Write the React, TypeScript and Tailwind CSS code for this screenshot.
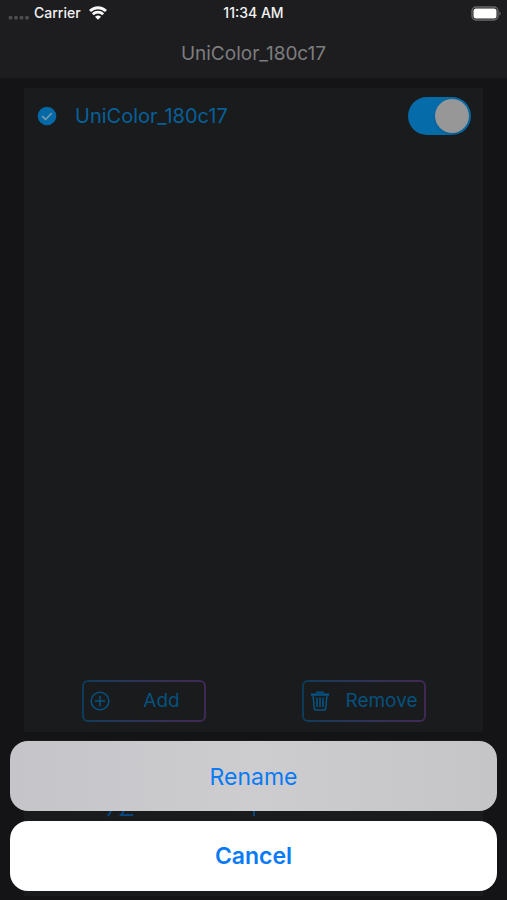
import { useState } from "react";

function StatusBar() {
  return (
    <div className="grid h-[26px] grid-cols-3 items-center px-[6px] text-sm font-medium text-[#f2f2f2]">
      <div className="flex items-center gap-1 pl-[2px]">
        <svg className="h-[10px] w-[22px] self-end" viewBox="0 0 22 10" fill="#4c4c4e" aria-hidden="true">
          <circle cx="2.5" cy="4.8" r="2" />
          <circle cx="8" cy="4.8" r="2" />
          <circle cx="13.5" cy="4.8" r="2" />
          <circle cx="19" cy="4.8" r="2" />
        </svg>
        <span>Carrier</span>
        <svg className="ml-1 h-[14px] w-[18px] shrink-0" viewBox="0 0 18 14" aria-hidden="true">
          <g fill="none" stroke="#f8f8f8" strokeWidth="2.8">
            <path d="M1 5.1C5.4.6 12.6.6 17 5.1" />
            <path d="M3.8 8.3C6.7 5.5 11.3 5.5 14.2 8.3" />
          </g>
          <path d="M9 13.8 6 10.8Q9 8.4 12 10.8Z" fill="#f8f8f8" />
        </svg>
      </div>
      <span className="text-center">11:34 AM</span>
      <svg className="h-[15px] w-[30px] justify-self-end" viewBox="0 0 30 15" aria-hidden="true">
        <rect x="1" y="1" width="26" height="13" rx="4" fill="none" stroke="#67676a" strokeWidth="1.4" />
        <rect x="2.5" y="2.5" width="23" height="10" rx="2.5" fill="#fff" />
        <path d="M28.3 5.3q1.4.7 1.4 2.2t-1.4 2.2z" fill="#67676a" />
      </svg>
    </div>
  );
}

function AddIcon() {
  return (
    <svg className="size-5 shrink-0" viewBox="0 0 20 20" fill="none" stroke="#06517f" strokeWidth="1.6" aria-hidden="true">
      <circle cx="10" cy="10" r="8.8" />
      <path d="M10 4.8v10.4M4.8 10h10.4" />
    </svg>
  );
}

function TrashIcon() {
  return (
    <svg className="size-5 shrink-0" viewBox="0 0 20 20" fill="none" stroke="#06517f" strokeWidth="1.6" aria-hidden="true">
      <path d="M.8 3.6h18.400" strokeWidth="2.4" />
      <path d="M7 3V1.200h6V3" />
      <path d="M3 4l1.300 13.200q.1 1.800 1.900 1.800h7.600q1.800 0 1.900-1.800L17 4" />
      <path d="M7 6.5v9.5M10 6.5v9.5M13 6.5v9.5" />
    </svg>
  );
}

function PanelButton({ icon, label }: { icon: React.ReactNode; label: string }) {
  return (
    <button type="button" className="h-[42px] w-[124px] rounded-md bg-linear-to-r from-[#0a3c59] to-[#412856] p-[2px]">
      <span className="flex h-full items-center rounded-[4px] bg-[#191b1c] pl-[6px]">
        {icon}
        <span className="flex-1 pt-px pl-[10px] text-center text-[19px] text-[#06517f]">{label}</span>
      </span>
    </button>
  );
}

export default function App() {
  const [selected, setSelected] = useState(true);
  const [enabled, setEnabled] = useState(true);
  const [open, setOpen] = useState(true);

  return (
    <div className="relative flex min-h-screen flex-col bg-[#141416] font-['Inter','Liberation_Sans',sans-serif]">
      <header className="h-[78px] bg-[#1d1d1f]">
        <StatusBar />
        <h1 className="pt-[14px] text-center text-[19px] leading-7 text-[#7d7d7f]">UniColor_180c17</h1>
      </header>

      <main className="flex flex-1 flex-col gap-2 px-6 pt-[10px] pb-1">
        <section className="flex flex-1 flex-col bg-[#191b1c] pb-[10px]">
          <div className="flex h-14 items-center pr-3 pl-[13px]">
            <label className="flex flex-1 items-center gap-[18px] text-xl text-[#06609a]">
              <input
                type="checkbox"
                className="peer sr-only"
                checked={selected}
                onChange={(e) => setSelected(e.target.checked)}
              />
              <svg className="size-5 shrink-0 opacity-40 peer-checked:opacity-100" viewBox="0 0 20 20" aria-hidden="true">
                <circle cx="10" cy="10" r="9.3" fill="#0669a7" />
                <path d="M5.2 10.1l3.4 3.3 6.200-6.400" fill="none" stroke="#7c9eae" strokeWidth="1.5" />
              </svg>
              <span>UniColor_180c17</span>
            </label>
            <label className="flex">
              <input
                type="checkbox"
                role="switch"
                aria-label="Enable UniColor_180c17"
                className="peer sr-only"
                checked={enabled}
                onChange={(e) => setEnabled(e.target.checked)}
              />
              <span className="flex h-[38px] w-[63px] items-center rounded-full bg-[#3a3a3c] p-[2px] peer-checked:justify-end peer-checked:bg-[#066ba9]">
                <span className="size-[34px] rounded-full bg-[#979797] shadow-sm" />
              </span>
            </label>
          </div>
          <div className="mt-auto flex justify-center gap-24">
            <PanelButton icon={<AddIcon />} label="Add" />
            <PanelButton icon={<TrashIcon />} label="Remove" />
          </div>
        </section>
        <section className="h-[156px] bg-[#191b1c]" />
      </main>

      {open && (
        <div role="dialog" aria-label="Color actions" className="absolute inset-x-0 bottom-0 px-[10px] pb-[9px] text-[23px] text-[#087af5]">
          <button type="button" className="block h-[70px] w-full rounded-[18px] bg-linear-to-r from-[#c5c5c9] via-[#cdcdd0] to-[#c5c5c8] pt-[2px]">
            Rename
          </button>
          <svg className="block h-[10px] w-full" aria-hidden="true">
            <path d="M101 0l-3 5M114 0l-3 4h12M244 0v5" fill="none" stroke="#06457f" strokeWidth="2" />
          </svg>
          <button type="button" onClick={() => setOpen(false)} className="block h-[70px] w-full rounded-[18px] bg-white font-semibold">
            Cancel
          </button>
        </div>
      )}
    </div>
  );
}
